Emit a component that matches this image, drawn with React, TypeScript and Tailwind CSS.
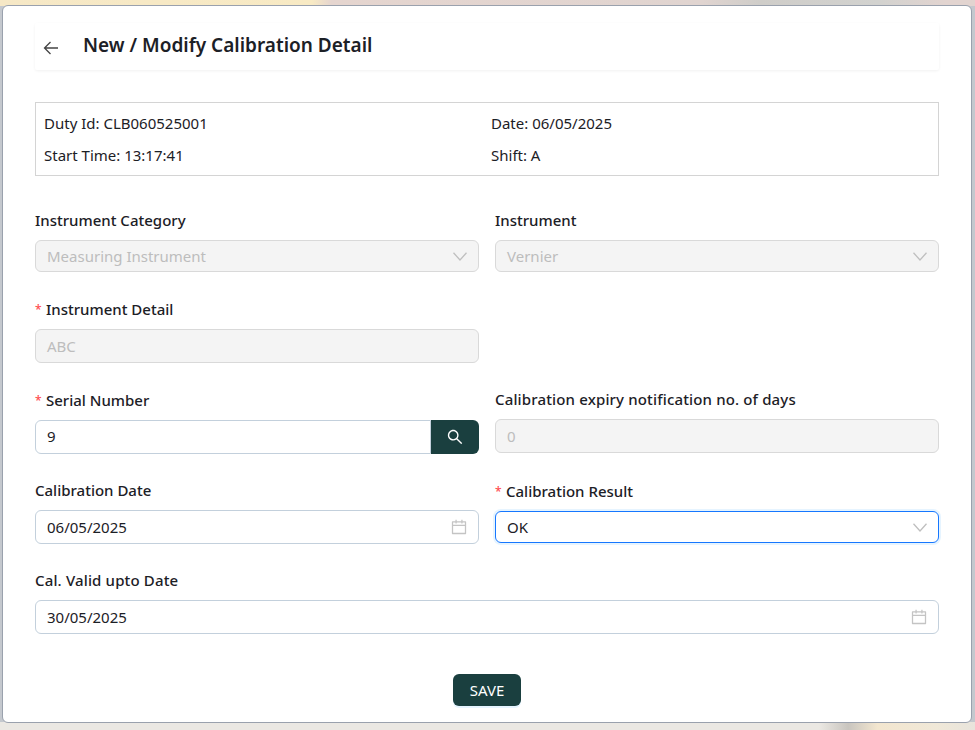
import { ReactNode } from "react";

const CALENDAR =
  "M880 184H712v-64c0-4.4-3.6-8-8-8h-56c-4.4 0-8 3.6-8 8v64H384v-64c0-4.4-3.6-8-8-8h-56c-4.4 0-8 3.6-8 8v64H144c-17.7 0-32 14.3-32 32v664c0 17.7 14.3 32 32 32h736c17.7 0 32-14.3 32-32V216c0-17.7-14.3-32-32-32zm-40 656H184V460h656v380zM184 392V256h128v48c0 4.4 3.6 8 8 8h56c4.4 0 8-3.6 8-8v-48h256v48c0 4.4 3.6 8 8 8h56c4.4 0 8-3.6 8-8v-48h128v136H184z";
const SEARCH =
  "M909.6 854.5L649.9 594.8C690.2 542.7 712 479 712 412c0-80.2-31.3-155.4-87.9-212.1-56.6-56.7-132-87.9-212.1-87.9s-155.5 31.3-212.1 87.9C143.2 256.5 112 331.8 112 412c0 80.1 31.3 155.5 87.9 212.1C256.5 680.8 331.8 712 412 712c67 0 130.6-21.8 182.7-62l259.7 259.6a8.2 8.2 0 0011.6 0l43.6-43.5a8.2 8.2 0 000-11.6zM570.4 570.4C528 612.7 471.8 636 412 636s-116-23.3-158.4-65.6C211.3 528 188 471.8 188 412s23.3-116.1 65.6-158.4C296 211.3 352.2 188 412 188s116.1 23.2 158.4 65.6S636 352.2 636 412s-23.3 116.1-65.6 158.4z";

const Chevron = () => (
  <svg width="14" height="9" viewBox="0 0 14 9" fill="none" stroke="#bfbfbf" strokeWidth="1.3">
    <path d="M0.5 0.8L7 8L13.5 0.8" />
  </svg>
);

const CalendarIcon = () => (
  <svg width="16" height="16" viewBox="64 64 896 896" fill="#c4c4c4">
    <path d={CALENDAR} />
  </svg>
);

const Label = ({ text, required, wide }: { text: string; required?: boolean; wide?: boolean }) => (
  <div
    className={`h-[22px] leading-[20px] mb-[8px] text-[15px] font-medium text-[#1c2026] flex items-start ${wide ? "tracking-[0.15px]" : ""}`}
  >
    {required && <span className="text-[#ff4d4f] text-[12px] leading-[22px] mr-[4px] w-[7px]">*</span>}
    {text}
  </div>
);

const Disabled = ({ value, tall, icon }: { value: string; tall?: boolean; icon?: ReactNode }) => (
  <div
    className={`${tall ? "h-[34px]" : "h-[32px]"} flex items-center justify-between pl-[11px] pr-[11px] bg-[#f4f4f4] border border-[#d9d9d9] rounded-[6px] text-[#bdbdbd] text-[15px]`}
  >
    <span className="pt-px">{value}</span>
    {icon}
  </div>
);

const DateInput = ({ value }: { value: string }) => (
  <div className="h-[34px] flex items-center justify-between pl-[11px] pr-[11px] bg-white border border-[#c3d0dc] rounded-[6px] text-[#1c2026] text-[15px]">
    <span className="pt-px">{value}</span>
    <CalendarIcon />
  </div>
);

export default function App() {
  return (
    <div className="h-[730px] w-[975px] overflow-hidden pt-[5px] pl-[2px] [background:linear-gradient(90deg,#ebe8e3_84%,#c9c5bf_87%,#f3e6cf_90%,#f0e8d8_96%,#e8e4dc_100%)_bottom/100%_8px_no-repeat,linear-gradient(90deg,#f6e8c6_0%,#f8eac4_32%,#e5d5cf_34%,#e0d4d0_72%,#cfcdc9_78%,#d2d2cf_90%,#e2d4d0_97%)_top/100%_6px_no-repeat,#c4c8ce] font-['Noto_Sans',sans-serif]">
      <div className="w-[970px] h-[718px] bg-white border border-[#9aa1ad] rounded-[6px] px-[32px] pt-[17px]">
        <div className="h-[47px] flex items-center pl-[8px] shadow-[0_1px_3px_rgba(0,0,0,0.06)] rounded-[2px]">
          <svg width="16" height="16" viewBox="0 0 16 16" fill="none" stroke="#444" strokeWidth="1.3" className="mt-[3px]">
            <path d="M15 8H1.5M7.5 2L1.5 8L7.5 14" />
          </svg>
          <h1 className="ml-[24px] text-[19px] font-semibold text-[#1c2026] leading-none -mt-[3px]">
            New / Modify Calibration Detail
          </h1>
        </div>

        <div className="mt-[32px] h-[74px] border border-[#d4d4d4] grid grid-cols-[447px_1fr] grid-rows-2 px-[8px] py-[4px] text-[15px] text-[#1c2026] items-center">
          <div>Duty Id: CLB060525001</div>
          <div>Date: 06/05/2025</div>
          <div>Start Time: 13:17:41</div>
          <div>Shift: A</div>
        </div>

        <div className="mt-[34px] grid grid-cols-2 gap-x-[16px]">
          <div>
            <Label text="Instrument Category" />
            <Disabled value="Measuring Instrument" icon={<Chevron />} />
          </div>
          <div>
            <Label text="Instrument" />
            <Disabled value="Vernier" icon={<Chevron />} />
          </div>
        </div>

        <div className="mt-[27px] grid grid-cols-2 gap-x-[16px]">
          <div>
            <Label text="Instrument Detail" required />
            <Disabled value="ABC" tall />
          </div>
        </div>

        <div className="mt-[26px] grid grid-cols-2 gap-x-[16px]">
          <div className="pt-px">
            <Label text="Serial Number" required />
            <div className="flex h-[34px] mt-[8px]">
              <div className="flex-1 flex items-center pl-[11px] pb-px border border-[#c3d0dc] rounded-l-[6px] text-[15px] text-[#1c2026]">
                9
              </div>
              <button className="w-[48px] flex items-center justify-center bg-[#1a3f3f] rounded-r-[6px]">
                <svg width="16" height="16" viewBox="64 64 896 896" fill="#fff">
                  <path d={SEARCH} />
                </svg>
              </button>
            </div>
          </div>
          <div>
            <Label text="Calibration expiry notification no. of days" wide />
            <div className="mt-[8px]">
              <Disabled value="0" tall />
            </div>
          </div>
        </div>

        <div className="mt-[26px] grid grid-cols-2 gap-x-[16px]">
          <div>
            <Label text="Calibration Date" />
            <div className="mt-[8px]">
              <DateInput value="06/05/2025" />
            </div>
          </div>
          <div className="pt-px">
            <Label text="Calibration Result" required />
            <div className="mt-[8px] h-[32px] flex items-center justify-between px-[11px] bg-white border border-[#1677ff] rounded-[6px] shadow-[0_0_0_2px_rgba(5,145,255,0.1)] text-[15px] text-[#1c2026]">
              <span className="pt-px">OK</span>
              <Chevron />
            </div>
          </div>
        </div>

        <div className="mt-[26px]">
          <Label text="Cal. Valid upto Date" wide />
          <div className="mt-[8px]">
            <DateInput value="30/05/2025" />
          </div>
        </div>

        <div className="mt-[40px] flex justify-center">
          <button className="w-[68px] h-[32px] bg-[#1a3f3f] rounded-[6px] text-white text-[15px] shadow-[0_2px_0_rgba(5,145,255,0.1)]">
            SAVE
          </button>
        </div>
      </div>
    </div>
  );
}
